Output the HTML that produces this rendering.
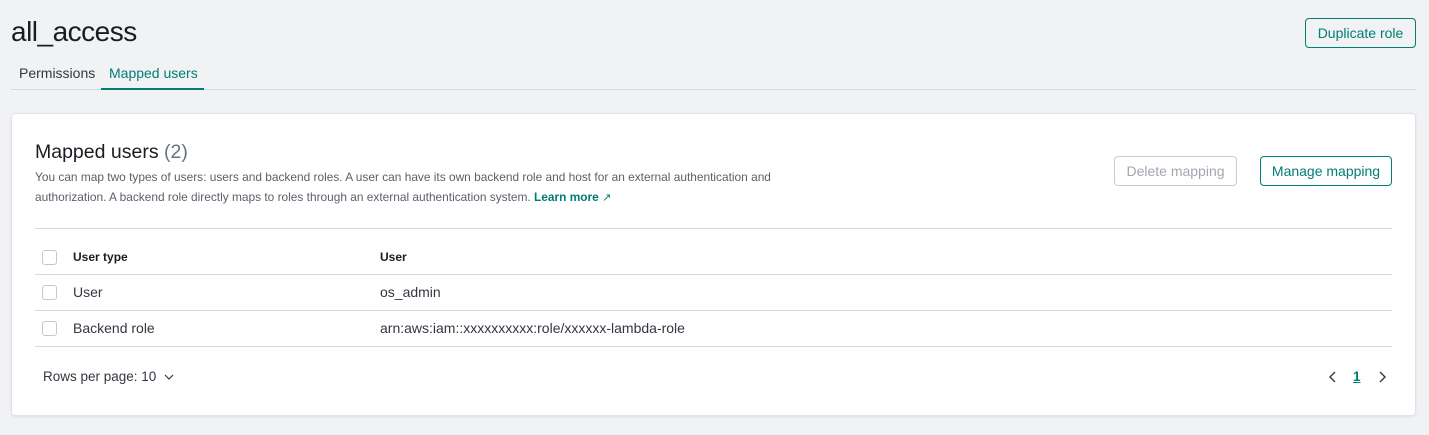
<!DOCTYPE html>
<html><head><meta charset="utf-8"><style>
*{margin:0;padding:0;box-sizing:border-box}
body{width:1429px;height:435px;background:#f1f2f4;font-family:"Liberation Sans",sans-serif;color:#343741;position:relative;overflow:hidden}
.a{position:absolute;white-space:nowrap}
.btn{position:absolute;border:1px solid #017d73;border-radius:4px;color:#017d73;font-size:14px;display:flex;align-items:center;justify-content:center;background:#fff0}
.cb{position:absolute;left:42px;width:15px;height:15px;border:1px solid #c3c7cf;border-radius:3px;background:#fff}
.line{position:absolute;left:35px;width:1357px;height:1px;background:#d3dae6}
</style></head><body>
<div class="a" style="left:11px;top:16px;font-size:28px;font-weight:300;color:#1a1c21;letter-spacing:-0.5px">all_access</div>
<div class="btn" style="left:1305px;top:18px;width:111px;height:30px">Duplicate role</div>
<div class="a" style="left:19px;top:65px;font-size:14px;color:#343741">Permissions</div>
<div class="a" style="left:109px;top:65px;font-size:14px;color:#017d73">Mapped users</div>
<div class="a" style="left:11px;top:89px;width:1405px;height:1px;background:#d3dae6"></div>
<div class="a" style="left:101px;top:88px;width:103px;height:2px;background:#017d73"></div>
<div class="a" style="left:11px;top:113px;width:1405px;height:303px;background:#fff;border:1px solid #dfe3e8;border-radius:4px;box-shadow:0 1px 2px rgba(0,0,0,.08)"></div>
<div class="a" style="left:35px;top:141px;font-size:19.5px;color:#1a1c21">Mapped users <span style="color:#69707d">(2)</span></div>
<div class="a" style="left:35px;top:167px;font-size:11.9px;line-height:20px;color:#5a5f69">You can map two types of users: users and backend roles. A user can have its own backend role and host for an external authentication and<br>authorization. A backend role directly maps to roles through an external authentication system. <b style="color:#017d73">Learn more</b> <span style="color:#017d73;font-size:11px">&#x2197;</span></div>
<div class="btn" style="left:1114px;top:156px;width:123px;height:30px;border-color:#c9ccd1;color:#a2a7af">Delete mapping</div>
<div class="btn" style="left:1260px;top:156px;width:132px;height:30px">Manage mapping</div>
<div class="line" style="top:228px"></div>
<div class="cb" style="top:250px"></div>
<div class="a" style="left:73px;top:250px;font-size:12px;font-weight:bold;color:#1a1c21">User type</div>
<div class="a" style="left:380px;top:250px;font-size:12px;font-weight:bold;color:#1a1c21">User</div>
<div class="line" style="top:274px"></div>
<div class="cb" style="top:285px"></div>
<div class="a" style="left:73px;top:284px;font-size:14px">User</div>
<div class="a" style="left:380px;top:284px;font-size:14px">os_admin</div>
<div class="line" style="top:310px"></div>
<div class="cb" style="top:321px"></div>
<div class="a" style="left:73px;top:320px;font-size:14px">Backend role</div>
<div class="a" style="left:380px;top:320px;font-size:14px">arn:aws:iam::xxxxxxxxxx:role/xxxxxx-lambda-role</div>
<div class="line" style="top:346px"></div>
<div class="a" style="left:43px;top:369px;font-size:13.5px">Rows per page: 10</div>
<svg class="a" style="left:164px;top:373px" width="10" height="8"><path d="M1 2l4 4 4-4" fill="none" stroke="#343741" stroke-width="1.2"/></svg>
<svg class="a" style="left:1328px;top:371px" width="10" height="12"><path d="M7 1L2 6l5 5" fill="none" stroke="#343741" stroke-width="1.4"/></svg>
<div class="a" style="left:1353px;top:369px;font-size:13.5px;font-weight:bold;color:#017d73;text-decoration:underline">1</div>
<svg class="a" style="left:1377px;top:371px" width="10" height="12"><path d="M3 1l5 5-5 5" fill="none" stroke="#343741" stroke-width="1.4"/></svg>
</body></html>
